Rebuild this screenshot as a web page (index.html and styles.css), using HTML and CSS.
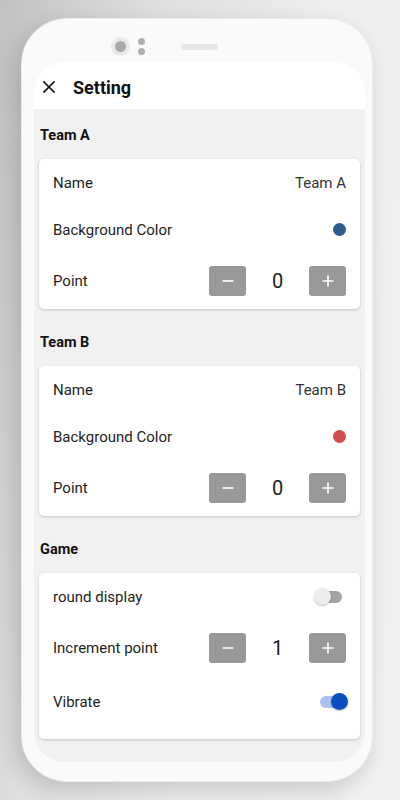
FILE: index.html
```html
<!DOCTYPE html>
<html lang="en">
<head>
<meta charset="utf-8">
<title>Setting</title>
<link rel="stylesheet" href="styles.css">
</head>
<body>
<div class="page">
  <div class="phone">
    <div class="side-btn side-btn-1"></div>
    <div class="side-btn side-btn-2"></div>
    <div class="bezel-top">
      <div class="camera"><div class="lens"></div></div>
      <div class="dots"><span></span><span></span></div>
      <div class="speaker"></div>
    </div>
    <div class="screen">
      <header class="appbar">
        <svg class="close-icon" width="12" height="12" viewBox="0 0 12 12"><path d="M1 1L11 11M11 1L1 11" stroke="#111" stroke-width="1.7" stroke-linecap="square"/></svg>
        <h1 class="title">Setting</h1>
      </header>
      <main class="content">
        <section class="section">
          <h2 class="section-title">Team A</h2>
          <div class="card">
            <div class="row"><span class="label">Name</span><span class="value">Team A</span></div>
            <div class="row"><span class="label">Background Color</span><span class="dot dot-blue"></span></div>
            <div class="row row-tall"><span class="label">Point</span>
              <div class="stepper">
                <button class="step-btn"><svg width="12" height="12" viewBox="0 0 12 12"><path d="M0.5 6H11.5" stroke="#fff" stroke-width="1.7"/></svg></button>
                <span class="step-val">0</span>
                <button class="step-btn"><svg width="12" height="12" viewBox="0 0 12 12"><path d="M0.5 6H11.5M6 0.5V11.5" stroke="#fff" stroke-width="1.7"/></svg></button>
              </div>
            </div>
          </div>
        </section>
        <section class="section">
          <h2 class="section-title">Team B</h2>
          <div class="card">
            <div class="row"><span class="label">Name</span><span class="value">Team B</span></div>
            <div class="row"><span class="label">Background Color</span><span class="dot dot-red"></span></div>
            <div class="row row-tall"><span class="label">Point</span>
              <div class="stepper">
                <button class="step-btn"><svg width="12" height="12" viewBox="0 0 12 12"><path d="M0.5 6H11.5" stroke="#fff" stroke-width="1.7"/></svg></button>
                <span class="step-val">0</span>
                <button class="step-btn"><svg width="12" height="12" viewBox="0 0 12 12"><path d="M0.5 6H11.5M6 0.5V11.5" stroke="#fff" stroke-width="1.7"/></svg></button>
              </div>
            </div>
          </div>
        </section>
        <section class="section">
          <h2 class="section-title">Game</h2>
          <div class="card card-game">
            <div class="row"><span class="label">round display</span>
              <span class="switch"><span class="track"></span><span class="thumb"></span></span>
            </div>
            <div class="row row-tall"><span class="label">Increment point</span>
              <div class="stepper">
                <button class="step-btn"><svg width="12" height="12" viewBox="0 0 12 12"><path d="M0.5 6H11.5" stroke="#fff" stroke-width="1.7"/></svg></button>
                <span class="step-val">1</span>
                <button class="step-btn"><svg width="12" height="12" viewBox="0 0 12 12"><path d="M0.5 6H11.5M6 0.5V11.5" stroke="#fff" stroke-width="1.7"/></svg></button>
              </div>
            </div>
            <div class="row row-vibrate"><span class="label">Vibrate</span>
              <span class="switch switch-on"><span class="track"></span><span class="thumb"></span></span>
            </div>
          </div>
        </section>
      </main>
    </div>
  </div>
</div>
</body>
</html>
```

FILE: styles.css
```css
* { box-sizing: border-box; }
html, body { margin: 0; padding: 0; }
body {
  width: 400px;
  height: 800px;
  overflow: hidden;
  font-family: Roboto, "Liberation Sans", sans-serif;
  background: linear-gradient(100deg, #c2c2c2 0%, #e0e0e0 30%, #eeeeee 60%, #f0f0f0 100%);
}
.page {
  padding: 18px 27px 18px 21px;
}
.phone {
  position: relative;
  width: 352px;
  height: 764px;
  background: #fafafa;
  border-radius: 46px;
  border: 1px solid #ececec;
  box-shadow: -6px 8px 22px rgba(0,0,0,0.16);
  padding: 0 7px 0 12px;
}
.side-btn {
  position: absolute;
  right: -6px;
  width: 3px;
  background: #e6e6e6;
  border-radius: 2px;
}
.side-btn-1 { top: 185px; height: 47px; }
.side-btn-2 { top: 280px; height: 95px; }
.bezel-top {
  height: 43px;
  display: flex;
  align-items: center;
  padding: 18px 0 6px 77px;
}
.camera {
  width: 19px;
  height: 19px;
  border-radius: 50%;
  background: #e9e9e9;
  display: flex;
  align-items: center;
  justify-content: center;
}
.lens {
  width: 11px;
  height: 11px;
  border-radius: 50%;
  background: #a8a8a8;
}
.dots {
  display: flex;
  flex-direction: column;
  gap: 3px;
  margin-left: 8px;
}
.dots span {
  width: 7px;
  height: 7px;
  border-radius: 50%;
  background: #b0b0b0;
}
.speaker {
  margin-left: 36px;
  width: 37px;
  height: 6px;
  border-radius: 3px;
  background: #e6e6e6;
}
.screen {
  height: 700px;
  border-radius: 30px;
  overflow: hidden;
  background: #f1f1f1;
  display: flex;
  flex-direction: column;
}
.appbar {
  height: 47px;
  background: #fff;
  display: flex;
  align-items: center;
  padding: 3px 0 0 9px;
  flex-shrink: 0;
}
.close-icon { display: block; margin-top: -1px; }
.title {
  margin: 0 0 0 18px;
  font-size: 18px;
  font-weight: 700;
  color: #111;
}
.content {
  padding: 17px 5px 0 5px;
  display: flex;
  flex-direction: column;
  gap: 24px;
}
.section-title {
  margin: 0 0 13px 1px;
  font-size: 14.5px;
  line-height: 20px;
  font-weight: 700;
  color: #111;
}
.card {
  background: #fff;
  border-radius: 5px;
  box-shadow: 0 1px 3px rgba(0,0,0,0.18);
  padding: 0 14px;
}
.card-game { padding-bottom: 12px; }
.row {
  height: 47px;
  display: flex;
  align-items: center;
  justify-content: space-between;
}
.row-tall { height: 56px; }
.row-vibrate { height: 51px; }
.label {
  font-size: 15px;
  color: #1e1e1e;
}
.value {
  font-size: 15px;
  color: #333;
}
.dot {
  width: 13px;
  height: 13px;
  border-radius: 50%;
}
.dot-blue { background: #2d5b8c; }
.dot-red { background: #d24d4f; }
.stepper {
  display: flex;
  align-items: center;
}
.step-btn {
  width: 37px;
  height: 30px;
  border: none;
  border-radius: 3px;
  background: #999999;
  padding: 0;
  display: flex;
  align-items: center;
  justify-content: center;
}
.step-btn svg { display: block; }
.step-val {
  width: 63px;
  text-align: center;
  font-size: 20px;
  color: #222;
}
.switch {
  position: relative;
  width: 34px;
  height: 18px;
  margin-right: -2px;
}
.switch .track {
  position: absolute;
  left: 6px;
  top: 3px;
  width: 22px;
  height: 12px;
  border-radius: 6px;
  background: #a3a3a3;
}
.switch .thumb {
  position: absolute;
  left: 0;
  top: 0;
  width: 17px;
  height: 17px;
  border-radius: 50%;
  background: #ececec;
  box-shadow: 0 1px 2px rgba(0,0,0,0.25);
}
.switch-on .track { background: #a9c3ee; }
.switch-on .thumb { left: 17px; background: #0a4fc1; }
```
